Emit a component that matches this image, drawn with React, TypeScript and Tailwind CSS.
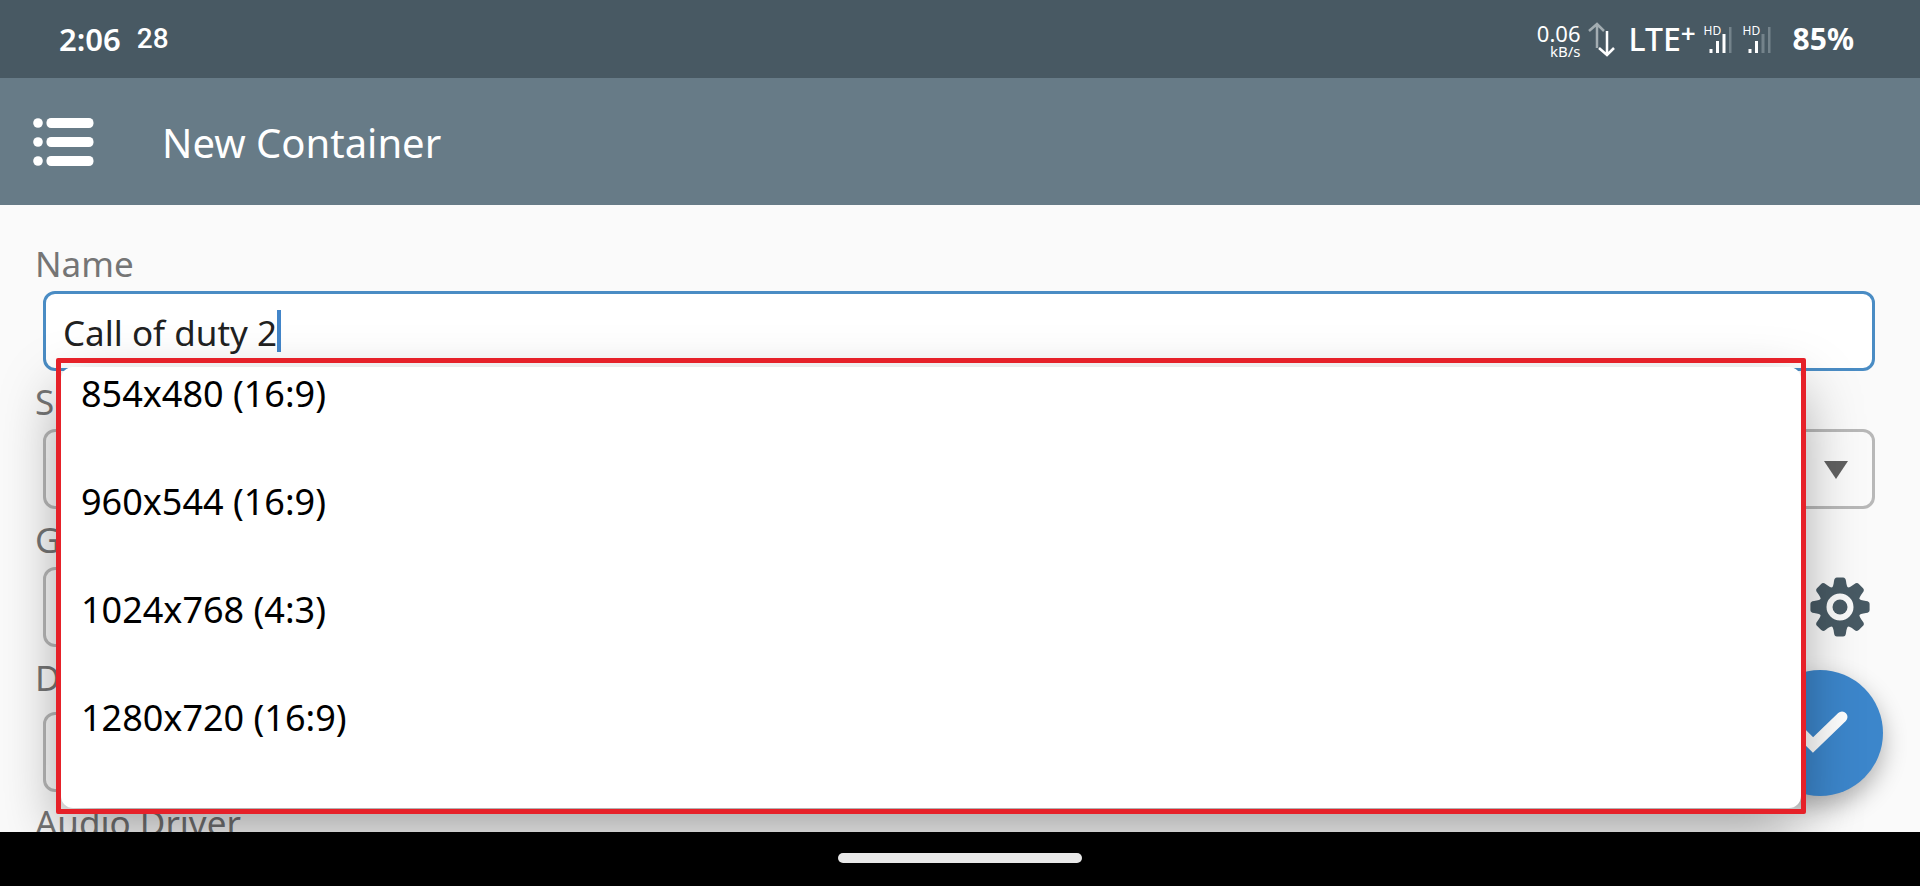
import React from "react";

const resolutions = ["854x480 (16:9)", "960x544 (16:9)", "1024x768 (4:3)", "1280x720 (16:9)"];

const GEAR_ANGLES = [0, 45, 90, 135, 180, 225, 270, 315];

function MenuIcon() {
  return (
    <svg width="62" height="50" viewBox="0 0 62 50" fill="#fff" aria-hidden="true">
      {[0, 19, 38].map((y) => (
        <g key={y}>
          <circle cx="5" cy={y + 6} r="4.800" />
          <rect x="13.500" y={y + 1} width="47" height="10" rx="4.500" />
        </g>
      ))}
    </svg>
  );
}

function GearIcon() {
  return (
    <svg width="60" height="60" viewBox="-30 -30 60 60" aria-hidden="true">
      <g fill="#485a64">
        {GEAR_ANGLES.map((a) => (
          <path
            key={a}
            transform={`rotate(${a})`}
            d="M-9.500 -17 C-7 -20 -6.500 -22 -6 -26 Q-5.600 -29.600 -3 -29.600 H3 Q5.600 -29.600 6 -26 C6.500 -22 7 -20 9.500 -17 Z"
          />
        ))}
        <path
          fillRule="evenodd"
          d="M-21 0 A21 21 0 1 1 21 0 A21 21 0 1 1 -21 0 Z M-13.500 0 A13.500 13.500 0 1 0 13.500 0 A13.500 13.500 0 1 0 -13.500 0 Z"
        />
        <circle r="7.500" />
      </g>
    </svg>
  );
}

function TransferIcon() {
  return (
    <svg width="28" height="36" viewBox="0 0 28 36" fill="none" strokeWidth="2.500" aria-hidden="true">
      <path d="M9 27 V3 M1 10 L9 3 L16 10" stroke="#a3adb2" />
      <path d="M19 10 V33 M11 27 L19 34 L26 27" stroke="#fff" />
    </svg>
  );
}

function Signal({ bars }: { bars: number }) {
  const heights = [4, 12, 19, 26];
  return (
    <span className="relative block h-7 w-7">
      <svg width="28" height="28" viewBox="0 0 28 28" aria-hidden="true">
        {heights.map((h, i) => (
          <rect
            key={h}
            x={5.5 + i * 6.5}
            y={28 - h}
            width={i === 3 ? 2.5 : 3}
            height={h}
            fill={i < bars ? "#fff" : "#74838b"}
          />
        ))}
      </svg>
      <span className="absolute top-0 left-0 text-[12px] leading-3">HD</span>
    </span>
  );
}

function StatusBar() {
  return (
    <div className="flex h-[78px] shrink-0 items-center justify-between bg-[#485963] pr-[66px] pl-[59px] text-white">
      <div className="flex items-center gap-4">
        <span className="text-[31px] leading-8 font-semibold">2:06</span>
        <span className="font-['Roboto',sans-serif] text-[28px] leading-8 font-medium">28</span>
      </div>
      <div className="flex items-center">
        <div className="flex flex-col items-end pt-1">
          <span className="text-[22px] leading-5">0.06</span>
          <span className="text-[15px] leading-4">kB/s</span>
        </div>
        <span className="ml-2">
          <TransferIcon />
        </span>
        <span className="ml-3 text-[32px] leading-8 font-medium">LTE</span>
        <span className="mb-3 text-[26px] leading-6 font-semibold">+</span>
        <span className="ml-2 flex gap-[11px]">
          <Signal bars={3} />
          <Signal bars={2} />
        </span>
        <span className="ml-[22px] text-[30px] leading-8 font-bold">85%</span>
      </div>
    </div>
  );
}

function SettingsButton({ label }: { label: string }) {
  return (
    <button type="button" aria-label={label} className="mr-[5px] ml-4">
      <GearIcon />
    </button>
  );
}

function SelectField({
  id,
  label,
  value,
  className = "",
  action,
}: {
  id: string;
  label: string;
  value: string;
  className?: string;
  action?: React.ReactNode;
}) {
  return (
    <div className="flex flex-col gap-[3px]">
      <label htmlFor={id} className="leading-[48px] text-[#757575]">
        {label}
      </label>
      <div className={`ml-2 flex items-center ${className}`}>
        <div className="relative grow">
          <select
            id={id}
            className="block h-20 w-full appearance-none rounded-xl border-3 border-[#b8b8b8] bg-transparent px-4 text-transparent outline-none"
          >
            <option>{value}</option>
          </select>
          <svg
            className="pointer-events-none absolute top-8 right-[27px]"
            width="24"
            height="18"
            viewBox="0 0 24 18"
            aria-hidden="true"
          >
            <path d="M0 0 H24 L12 18 Z" fill="#616161" />
          </svg>
        </div>
        {action}
      </div>
    </div>
  );
}

export default function App() {
  return (
    <div className="flex h-screen flex-col overflow-hidden bg-black font-['Noto_Sans',sans-serif] text-[35px]">
      <StatusBar />
      <header className="flex h-[127px] shrink-0 items-center bg-[#677b87] pl-[33px] text-white">
        <button type="button" aria-label="Menu">
          <MenuIcon />
        </button>
        <h1 className="ml-[67px] pt-0.5 text-[40px] leading-[48px]">New Container</h1>
      </header>

      <main className="relative min-h-0 grow overflow-hidden bg-[#fafafa]">
        <form className="flex flex-col gap-[7px] pt-[35px] pr-[45px] pl-[35px]">
          <div className="flex flex-col gap-[3px]">
            <label htmlFor="name" className="leading-[48px] text-[#757575]">
              Name
            </label>
            <div className="ml-2 flex h-20 items-center rounded-xl border-3 border-[#4a8cc4] bg-white pl-[17px]">
              <input
                id="name"
                defaultValue="Call of duty 2"
                className="[field-sizing:content] bg-transparent pt-1 leading-[48px] text-[#212121] caret-transparent outline-none"
              />
              <span className="h-[42px] w-1 bg-[#4285c9]" />
            </div>
          </div>
          <SelectField id="screen" label="Screen Size" value="1280x720 (16:9)" />
          <SelectField
            id="graphics"
            label="Graphics Driver"
            value="Turnip"
            action={<SettingsButton label="Graphics settings" />}
          />
          <SelectField
            id="wrapper"
            label="DX Wrapper"
            value="DXVK"
            className="pt-[7px]"
            action={<SettingsButton label="Wrapper settings" />}
          />
          <SelectField id="audio" label="Audio Driver" value="ALSA" />
        </form>

        <button
          type="button"
          aria-label="Confirm"
          className="absolute right-[37px] bottom-9 size-[126px] rounded-full bg-[#3c86cb] shadow-[0_10px_24px_rgba(0,0,0,0.3)]"
        >
          <svg
            width="126"
            height="126"
            viewBox="0 0 126 126"
            fill="none"
            stroke="#fff"
            strokeWidth="11"
            strokeLinecap="round"
            aria-hidden="true"
          >
            <path d="M38 57 L56 75 L85 47" />
          </svg>
        </button>

        <div className="absolute top-[153px] right-[114px] left-[56px] px-[5px] pt-[9px] pb-[6px]">
          <ul
            role="listbox"
            aria-label="Screen Size"
            className="rounded-xl bg-white pt-[3px] pb-[6px] text-[36px] text-black shadow-[0_24px_60px_rgba(0,0,0,0.36)]"
          >
            {resolutions.map((r) => (
              <li key={r} role="option" aria-selected="false" className="h-[108px] pl-5 leading-[48px]">
                {r}
              </li>
            ))}
          </ul>
          <div className="pointer-events-none absolute inset-0 rounded-xs border-5 border-[#e62129]" />
        </div>
      </main>

      <div className="flex h-[54px] shrink-0 items-center justify-center pb-0.5">
        <span className="h-[10px] w-[244px] rounded-full bg-[#e8e8e8]" />
      </div>
    </div>
  );
}
